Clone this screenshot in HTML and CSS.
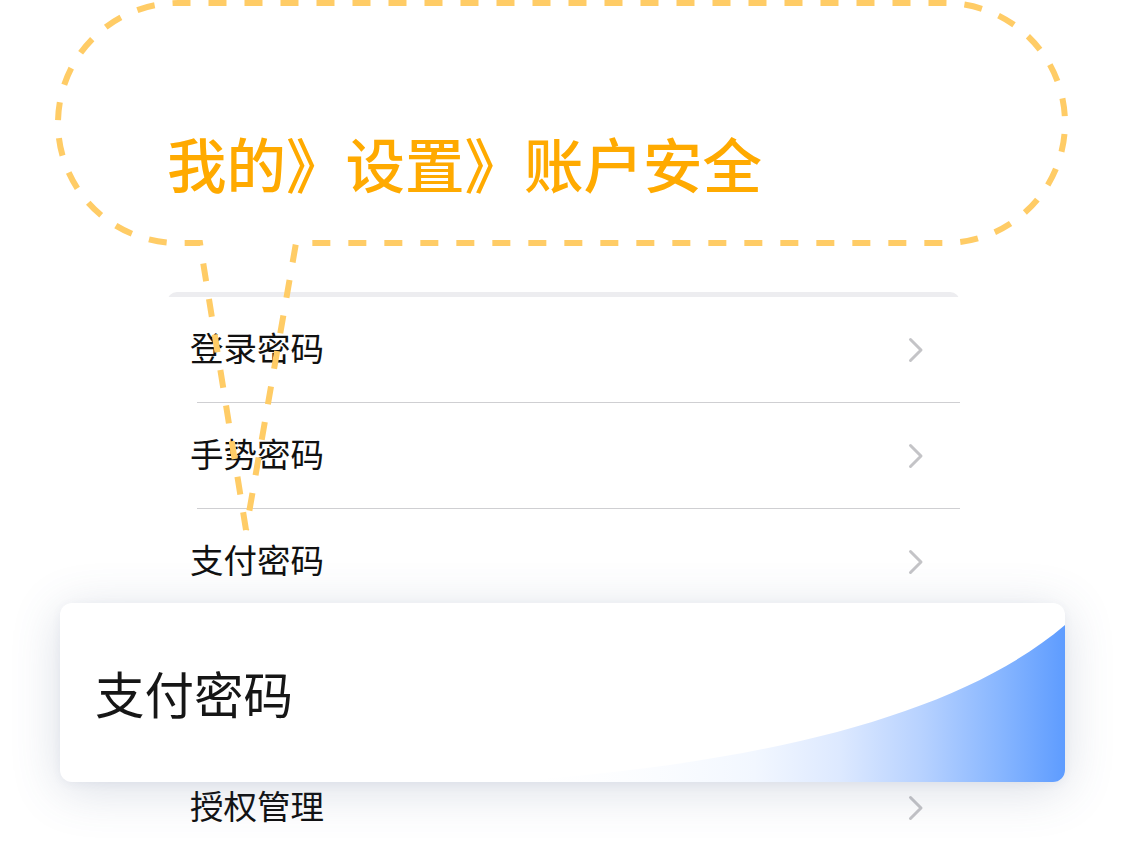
FILE: index.html
```html
<!DOCTYPE html>
<html lang="zh">
<head>
<meta charset="utf-8">
<link rel="stylesheet" href="styles.css">
</head>
<body>
<div class="page">
  <header class="crumb-area">
    <div class="crumb">我的》设置》账户安全</div>
  </header>

  <section class="list">
    <div class="row"><span class="label">登录密码</span><svg class="chev" viewBox="0 0 16 26"><polyline points="2.5,2.5 13,13 2.5,23.5"/></svg></div>
    <div class="row"><span class="label">手势密码</span><svg class="chev" viewBox="0 0 16 26"><polyline points="2.5,2.5 13,13 2.5,23.5"/></svg></div>
    <div class="row no-sep"><span class="label">支付密码</span><svg class="chev" viewBox="0 0 16 26"><polyline points="2.5,2.5 13,13 2.5,23.5"/></svg></div>
    <div class="spacer"></div>
    <div class="row no-sep"><span class="label">授权管理</span><svg class="chev" viewBox="0 0 16 26"><polyline points="2.5,2.5 13,13 2.5,23.5"/></svg></div>
  </section>

  <div class="zoom-card">
    <svg class="wave" viewBox="0 0 1005 179" preserveAspectRatio="none">
      <defs>
        <linearGradient id="wg" x1="0" y1="0" x2="1" y2="0">
          <stop offset="0" stop-color="#ffffff" stop-opacity="0"/>
          <stop offset="0.45" stop-color="#f2f7ff"/>
          <stop offset="0.6" stop-color="#dde9ff"/>
          <stop offset="0.75" stop-color="#b6d1ff"/>
          <stop offset="0.89" stop-color="#86b5ff"/>
          <stop offset="1" stop-color="#5e9cff"/>
        </linearGradient>
      </defs>
      <path d="M 440 179 C 700 162, 900 112, 1005 22 L 1005 179 Z" fill="url(#wg)"/>
    </svg>
    <span class="zoom-label">支付密码</span>
  </div>

  <svg class="bubble" viewBox="0 0 1125 861">
    <path d="M 246 530 L 200 243 L 178 243 A 120 120 0 0 1 178 3 L 945 3 A 120 120 0 0 1 945 243 L 296 243 L 246 530"
          fill="none" stroke="#ffcc66" stroke-width="6" stroke-dasharray="18 18"/>
  </svg>
</div>
</body>
</html>
```

FILE: styles.css
```css
html, body {
  margin: 0;
  padding: 0;
  background: #ffffff;
}

body {
  font-family: "Noto Sans CJK SC", "Noto Sans", sans-serif;
  color: #111111;
}

.page {
  position: relative;
  width: 1125px;
  height: 861px;
  overflow: hidden;
  background: #ffffff;
}

.crumb-area {
  height: 292px;
  box-sizing: border-box;
  padding: 132px 0 0 167px;
}

.crumb {
  font-size: 59.5px;
  line-height: 60px;
  font-weight: 500;
  color: #ffaa00;
  letter-spacing: 0;
}

.list {
  margin-left: 167px;
  width: 793px;
  background: #ededf0;
  border-radius: 10px 10px 0 0;
  padding-top: 5px;
}

.row {
  position: relative;
  height: 105px;
  background: #ffffff;
  display: flex;
  align-items: center;
  justify-content: space-between;
  padding: 0 36px 0 23px;
  border-bottom: 1px solid transparent;
}

.row::after {
  content: "";
  position: absolute;
  left: 30px;
  right: 0;
  bottom: -1px;
  height: 1px;
  background: #cfcfd2;
}

.row.no-sep::after {
  display: none;
}

.label {
  font-size: 33.5px;
  line-height: 40px;
  color: #111111;
  position: relative;
  top: -3px;
}

.chev {
  width: 16px;
  height: 26px;
}

.chev polyline {
  fill: none;
  stroke: #c4c4c7;
  stroke-width: 3;
  stroke-linecap: round;
  stroke-linejoin: round;
}

.spacer {
  height: 140px;
  background: #ffffff;
}

.zoom-card {
  position: absolute;
  left: 60px;
  top: 603px;
  width: 1005px;
  height: 179px;
  border-radius: 12px;
  background: #ffffff;
  overflow: hidden;
  box-shadow: 0 8px 50px rgba(70, 90, 130, 0.2), 0 2px 10px rgba(70, 90, 130, 0.06);
  display: flex;
  align-items: center;
  box-sizing: border-box;
  padding: 0 0 0 35px;
}

.wave {
  position: absolute;
  left: 0;
  top: 0;
  width: 1005px;
  height: 179px;
}

.zoom-label {
  position: relative;
  font-size: 49.5px;
  line-height: 60px;
  color: #161616;
}

.bubble {
  position: absolute;
  left: 0;
  top: 0;
  width: 1125px;
  height: 861px;
  pointer-events: none;
}
```
